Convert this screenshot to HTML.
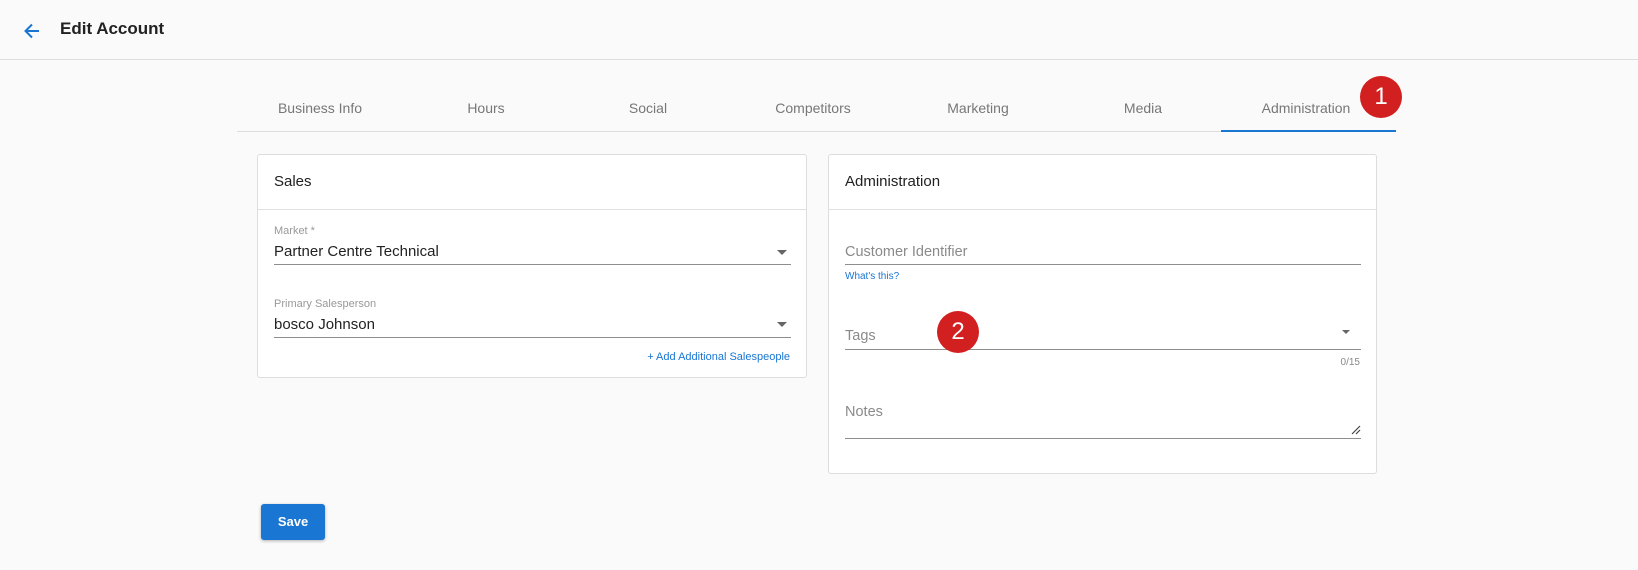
<!DOCTYPE html>
<html><head><style>
*{box-sizing:border-box;margin:0;padding:0}
body{width:1638px;height:570px;background:#fafafa;font-family:"Liberation Sans",sans-serif;position:relative;overflow:hidden;color:#212121}
.a{position:absolute}
.hdr{left:0;top:0;width:1638px;height:60px;border-bottom:1px solid #ddd}
.tab{position:absolute;top:100px;font-size:14px;color:#777;text-align:center;width:166px}
.card{position:absolute;background:#fff;border:1px solid #ddd;border-radius:3px}
.lbl{position:absolute;font-size:11px;color:#999}
.val{position:absolute;font-size:15px;color:#222}
.ph{position:absolute;font-size:14.5px;color:#8a8a8a}
.line{position:absolute;height:1px;background:#8e8e8e}
.tri{position:absolute;width:0;height:0;border-left:5px solid transparent;border-right:5px solid transparent;border-top:5px solid #666}
.badge{position:absolute;width:42px;height:42px;border-radius:50%;background:#d21f1f;color:#fff;font-size:24px;text-align:center;line-height:42px}
</style></head><body>
<div class="a hdr"></div>
<svg class="a" style="left:22px;top:21px" width="20" height="20" viewBox="0 0 20 20"><path d="M17 10H4M10 3.5 3.5 10 10 16.5" stroke="#1976d2" stroke-width="2" fill="none"/></svg>
<div class="a" style="left:60px;top:19px;font-size:17px;font-weight:bold;color:#222">Edit Account</div>

<div class="a" style="left:237px;top:131px;width:1159px;height:1px;background:#ddd"></div>
<div class="tab" style="left:237px">Business Info</div>
<div class="tab" style="left:403px">Hours</div>
<div class="tab" style="left:565px">Social</div>
<div class="tab" style="left:730px">Competitors</div>
<div class="tab" style="left:895px">Marketing</div>
<div class="tab" style="left:1060px">Media</div>
<div class="tab" style="left:1223px">Administration</div>
<div class="a" style="left:1221px;top:130px;width:175px;height:2px;background:#1976d2"></div>
<div class="badge" style="left:1360px;top:76px">1</div>

<div class="card" style="left:257px;top:154px;width:550px;height:224px">
 <div class="a" style="left:16px;top:18px;font-size:15px">Sales</div>
 <div class="a" style="left:0;top:54px;width:548px;height:1px;background:#e0e0e0"></div>
 <div class="lbl" style="left:16px;top:70px">Market *</div>
 <div class="val" style="left:16px;top:88px">Partner Centre Technical</div>
 <div class="tri" style="left:519px;top:95px"></div>
 <div class="line" style="left:16px;top:109px;width:517px"></div>
 <div class="lbl" style="left:16px;top:143px">Primary Salesperson</div>
 <div class="val" style="left:16px;top:161px">bosco Johnson</div>
 <div class="tri" style="left:519px;top:167px"></div>
 <div class="line" style="left:16px;top:182px;width:517px"></div>
 <div class="a" style="right:16px;top:196px;font-size:11px;color:#1976d2">+ Add Additional Salespeople</div>
</div>

<div class="card" style="left:828px;top:154px;width:549px;height:320px">
 <div class="a" style="left:16px;top:18px;font-size:15px">Administration</div>
 <div class="a" style="left:0;top:54px;width:547px;height:1px;background:#e0e0e0"></div>
 <div class="ph" style="left:16px;top:89px">Customer Identifier</div>
 <div class="line" style="left:16px;top:109px;width:516px"></div>
 <div class="a" style="left:16px;top:116px;font-size:10px;color:#1976d2">What's this?</div>
 <div class="ph" style="left:16px;top:173px">Tags</div>
 <div class="tri" style="left:513px;top:175px;border-left-width:4px;border-right-width:4px;border-top-width:4px"></div>
 <div class="line" style="left:16px;top:194px;width:516px"></div>
 <div class="a" style="right:16px;top:202px;font-size:10px;color:#888">0/15</div>
 <div class="ph" style="left:16px;top:249px">Notes</div>
 <svg class="a" style="left:522px;top:270px" width="10" height="10"><path d="M1 9 9 1M5 9 9 5" stroke="#444" stroke-width="1.2"/></svg>
 <div class="line" style="left:16px;top:283px;width:516px"></div>
</div>
<div class="badge" style="left:937px;top:311px">2</div>

<div class="a" style="left:261px;top:504px;width:64px;height:36px;background:#1976d2;border-radius:3px;box-shadow:0 1px 3px rgba(0,0,0,.3);color:#fff;font-weight:bold;font-size:13px;text-align:center;line-height:36px">Save</div>
</body></html>
